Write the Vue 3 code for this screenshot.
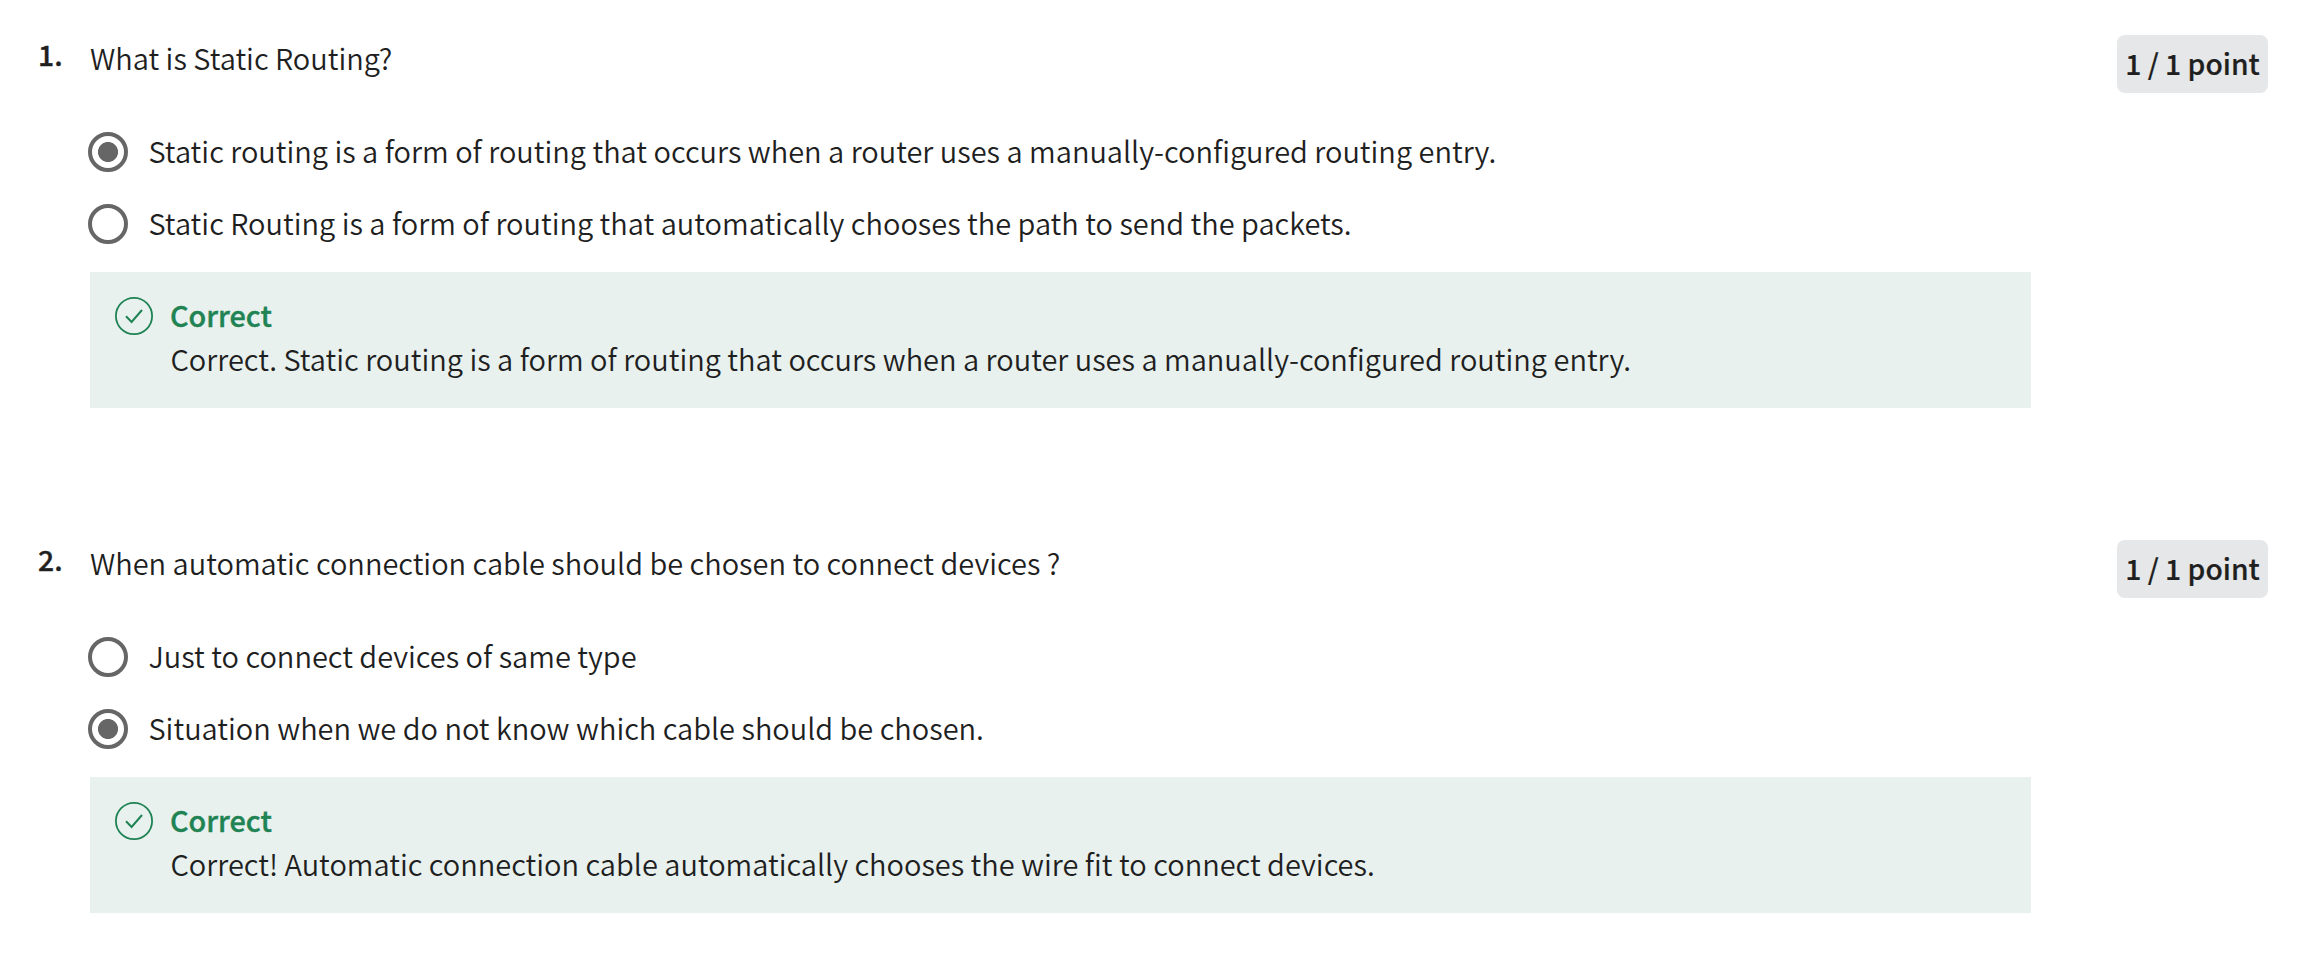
<script setup>
const questions = [
  {
    title: 'What is Static Routing?',
    options: [
      { text: 'Static routing is a form of routing that occurs when a router uses a manually-configured routing entry.', checked: true },
      { text: 'Static Routing is a form of routing that automatically chooses the path to send the packets.', checked: false },
    ],
    feedback: 'Correct. Static routing is a form of routing that occurs when a router uses a manually-configured routing entry.',
  },
  {
    title: 'When automatic connection cable should be chosen to connect devices ?',
    options: [
      { text: 'Just to connect devices of same type', checked: false },
      { text: 'Situation when we do not know which cable should be chosen.', checked: true },
    ],
    feedback: 'Correct! Automatic connection cable automatically chooses the wire fit to connect devices.',
  },
]
</script>

<template>
  <main class="quiz">
    <section v-for="(q, i) in questions" :key="i" class="question">
      <div class="number">{{ i + 1 }}.</div>
      <div class="body">
        <h2 class="title">{{ q.title }}</h2>
        <div class="options">
          <div v-for="o in q.options" :key="o.text" class="option">
            <span class="radio" :class="{ checked: o.checked }"></span>
            <span class="label">{{ o.text }}</span>
          </div>
        </div>
        <div class="feedback">
          <svg class="check" viewBox="0 0 38 38" fill="none" stroke="#1f8354">
            <circle cx="19" cy="19" r="18.1" stroke-width="1.8" />
            <path d="M11 19.2 L16.6 25 L27 13" stroke-width="2" />
          </svg>
          <div>
            <div class="verdict">Correct</div>
            <div class="note">{{ q.feedback }}</div>
          </div>
        </div>
      </div>
      <div class="points">1 / 1 point</div>
    </section>
  </main>
</template>

<style>
body {
  background: #fff;
}
</style>

<style scoped>
.quiz {
  box-sizing: border-box;
  width: 2323px;
  height: 956px;
  padding: 35px 55px 0 37px;
  font-family: "Noto Sans CJK SC", "Noto Sans", sans-serif;
  font-size: 28.97px;
  font-weight: 350;
  line-height: 44px;
  color: #1f1f1f;
}
.question {
  display: grid;
  grid-template-columns: 53px 1941px 151px;
  column-gap: 0;
  height: 373px;
}
.question + .question {
  margin-top: 132px;
}
.number {
  padding-left: 1px;
  font-weight: 500;
  font-size: 28.3px;
  line-height: 38px;
  -webkit-text-stroke: 0.4px currentColor;
}
.points {
  box-sizing: border-box;
  margin-left: 86px;
  width: 151px;
  height: 58px;
  border-radius: 8px;
  background: #e5e7e8;
  text-align: center;
  white-space: nowrap;
  font-weight: 500;
  font-size: 28.3px;
  line-height: 56px;
  -webkit-text-stroke: 0.2px currentColor;
}
.title {
  margin: 0;
  font-size: inherit;
  font-weight: inherit;
}
.options {
  display: flex;
  flex-direction: column;
  gap: 28px;
  margin-top: 51px;
}
.option {
  display: flex;
  align-items: center;
  gap: 20.5px;
  height: 44px;
  margin-left: -2px;
}
.radio {
  box-sizing: border-box;
  flex: none;
  width: 40px;
  height: 40px;
  border: 4px solid #666;
  border-radius: 50%;
}
.radio.checked {
  background: radial-gradient(circle, #666 9.6px, transparent 10.4px);
}
.label {
  margin-bottom: 5px;
}
.feedback {
  box-sizing: border-box;
  display: flex;
  gap: 17px;
  height: 136px;
  margin-top: 26px;
  padding: 21px 25px;
  background: #e8f1ee;
}
.check {
  flex: none;
  width: 38px;
  height: 38px;
  margin-top: 4px;
}
.verdict {
  font-weight: 500;
  font-size: 28.8px;
  color: #1f8354;
  -webkit-text-stroke: 0.4px currentColor;
}
.note {
  margin-top: -1px;
  padding-left: 0.5px;
}
</style>
